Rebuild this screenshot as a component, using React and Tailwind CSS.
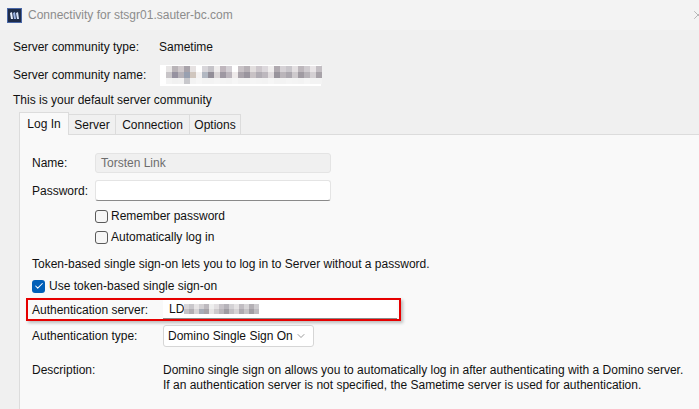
import { ChevronDown, Check, X } from 'lucide-react';

const font = { fontFamily: '"Liberation Sans", Arial, sans-serif' };

const BLUR_A = [
  ['#e8e6e6', '#b9b4b8', '#cfc9cc', '#a8a3aa', '#e6e2e2', '#ffffff', '#d8d6da', '#c5c3c8', '#efeded', '#bfb6bd', '#d4d0d5', '#ffffff', '#c8c2c6', '#b7b1b6', '#e2dede', '#cdc7cc', '#dcd8dc', '#f0eeee', '#b0aab0', '#d6d2d6', '#c9c6cb', '#e4e0e2', '#bdb7bc', '#d0ccd0', '#e9e5e7', '#c3bec3'],
  ['#c8c5c8', '#9692a0', '#b6b2b8', '#98a0b0', '#d0c6be', '#f4f2f2', '#b2b8c2', '#928e98', '#dad6d7', '#9e98a2', '#bcb6bd', '#eeeaea', '#aaa4ab', '#9a959e', '#c8c2c5', '#b0acb3', '#bdb8be', '#e0dcde', '#98949c', '#bab5ba', '#aba7ae', '#ceCAcd', '#a09ba2', '#b7b3b8', '#d4d0d3', '#a7a2a8'],
  ['#f4f4f4', '#f1f1f1', '#f2f2f2', '#c8c8cc', '#f3f3f3', '#f6f6f6', '#f3f3f3', '#f3f3f3', '#f5f5f5', '#f4f4f4', '#f3f3f3', '#f6f6f6', '#f3f3f3', '#f3f3f3', '#f5f5f5', '#f4f4f4', '#f3f3f3', '#f6f6f6', '#f3f3f3', '#f3f3f3', '#f5f5f5', '#f4f4f4', '#f3f3f3', '#f6f6f6', '#f3f3f3', '#f3f3f3'],
];

const BLUR_B = [
  ['#d9d7da', '#c9c7cb', '#e7e5e6', '#d3d0d3', '#bdb9be', '#eeeeee', '#e2dfe1', '#c7c3c8', '#b6b3b9', '#d4d2d5', '#e5e3e4', '#c1bdc2', '#d8d6d8', '#b4b0b5', '#cfcdd0'],
  ['#c4c2c6', '#b1aeb3', '#d7d4d6', '#a7acb7', '#a7a3a8', '#e6e4e4', '#cdcacc', '#b9b5ba', '#9f9ca2', '#c2bfc3', '#d6d3d5', '#aeaab0', '#c6c3c6', '#a19ea4', '#bebbc0'],
];

const Pixels = ({ rows, size = 5 }) => (
  <div className="flex flex-col">
    {rows.map((row, i) => (
      <div key={i} className="flex">
        {row.map((c, j) => (
          <div key={j} style={{ backgroundColor: c, width: size, height: size }} />
        ))}
      </div>
    ))}
  </div>
);

const AppIcon = () => (
  <svg width="15" height="15" viewBox="0 0 15 15" className="shrink-0">
    <rect x="0.5" y="0.5" width="14" height="14" fill="#1f2d4a" stroke="#4a68a8" />
    <path d="M3 5 L5 4 L6 11 L4 11 Z" fill="#e8eefb" />
    <path d="M6 5 L8 4 L9 11 L7 11 Z" fill="#9fb6e6" />
    <path d="M9 5 L11 4 L12 11 L10 11 Z" fill="#d8e2f7" />
  </svg>
);

const Checkbox = ({ checked }) =>
  checked ? (
    <div className="w-[13px] h-[13px] rounded-[3px] bg-[#005fb8] flex items-center justify-center shrink-0">
      <Check className="w-[10px] h-[10px] text-white" strokeWidth={2.5} />
    </div>
  ) : (
    <div className="w-[13px] h-[13px] rounded-[3px] border border-[#5a5a5a] bg-[#f6f6f6] shrink-0" />
  );

export default function App() {
  return (
    <div className="w-[699px] h-[409px] overflow-hidden bg-[#f0f0f0] text-[12px] text-[#111]" style={font}>
      {/* Title bar */}
      <div className="h-[30px] bg-[#f3f3f3] flex items-center justify-between pl-[7px] overflow-hidden">
        <div className="flex items-center gap-[6px]">
          <AppIcon />
          <span className="text-[#8c8c8c] text-[12px]">Connectivity for stsgr01.sauter-bc.com</span>
        </div>
        <X className="w-[14px] h-[14px] text-[#8a8a8a] -mr-[6px]" strokeWidth={1} />
      </div>

      {/* Header rows */}
      <div className="pl-[13px]">
        <div className="mt-[7px] h-[20px] flex items-center">
          <span className="w-[146px]">Server community type:</span>
          <span>Sametime</span>
        </div>
        <div className="mt-[7px] h-[22px] flex items-center">
          <span className="w-[147px]">Server community name:</span>
          <div className="w-[161px] h-[21px] bg-white flex items-center pl-[6px]">
            <Pixels rows={BLUR_A} size={6} />
          </div>
        </div>
        <div className="mt-[5px] h-[18px] flex items-center">This is your default server community</div>
      </div>

      {/* Tabs */}
      <div className="mt-[3px] pl-[19px] h-[22px] flex items-end">
        <div className="h-[23px] w-[50px] bg-[#f9f9f9] border border-b-0 border-[#dcdcdc] flex items-center justify-center relative z-10 -mb-px">
          Log In
        </div>
        <div className="h-[20px] w-[47px] bg-[#f0f0f0] border border-l-0 border-b-0 border-[#dcdcdc] flex items-center justify-center">Server</div>
        <div className="h-[20px] w-[74px] bg-[#f0f0f0] border border-l-0 border-b-0 border-[#dcdcdc] flex items-center justify-center">Connection</div>
        <div className="h-[20px] w-[51px] bg-[#f0f0f0] border border-l-0 border-b-0 border-[#dcdcdc] flex items-center justify-center">Options</div>
      </div>

      {/* Tab panel */}
      <div className="ml-[19px] h-[300px] bg-[#f9f9f9] border-l border-t border-[#dcdcdc] pl-[12px]">
        <div className="mt-[18px] h-[20px] flex items-center">
          <span className="w-[63px]">Name:</span>
          <div className="w-[236px] h-[20px] bg-[#f0f0f0] border border-[#e4e4e4] rounded-[3px] flex items-center pl-[5px] text-[#6d6d6d]">
            Torsten Link
          </div>
        </div>
        <div className="mt-[7px] h-[21px] flex items-center">
          <span className="w-[63px]">Password:</span>
          <div className="w-[236px] h-[21px] bg-white border border-[#e4e4e4] border-b-[#8a8a8a] rounded-[3px]" />
        </div>
        <div className="mt-[7px] h-[16px] flex items-center pl-[63px] gap-[3px]">
          <Checkbox />
          <span>Remember password</span>
        </div>
        <div className="mt-[5px] h-[16px] flex items-center pl-[63px] gap-[3px]">
          <Checkbox />
          <span>Automatically log in</span>
        </div>
        <div className="mt-[11px] h-[16px] flex items-center">
          Token-based single sign-on lets you to log in to Server without a password.
        </div>
        <div className="mt-[6px] h-[16px] flex items-center gap-[4px]">
          <Checkbox checked />
          <span>Use token-based single sign-on</span>
        </div>

        {/* Highlighted row */}
        <div className="mt-[4px] -ml-[6px] w-[375px] h-[23px] border-2 border-[#e60000] shadow-[2px_2px_3px_rgba(0,0,0,0.25)] flex items-center pl-[4px]">
          <span className="w-[131px]">Authentication server:</span>
          <div className="w-[234px] h-[19px] bg-white border-b border-[#8a8a8a] flex items-center pl-[6px]">
            <span>LD</span>
            <Pixels rows={BLUR_B} size={5} />
          </div>
        </div>

        <div className="mt-[3px] h-[23px] flex items-center">
          <span className="w-[131px]">Authentication type:</span>
          <div className="w-[151px] h-[22px] bg-white border border-[#d6d6d6] rounded-[3px] flex items-center justify-between pl-[4px] pr-[6px]">
            <span>Domino Single Sign On</span>
            <ChevronDown className="w-[12px] h-[12px] text-[#7a7a7a]" strokeWidth={1.5} />
          </div>
        </div>

        <div className="mt-[16px] flex leading-[15px]">
          <span className="w-[131px] shrink-0">Description:</span>
          <div>
            <div>Domino single sign on allows you to automatically log in after authenticating with a Domino server.</div>
            <div>If an authentication server is not specified, the Sametime server is used for authentication.</div>
          </div>
        </div>
      </div>
    </div>
  );
}
